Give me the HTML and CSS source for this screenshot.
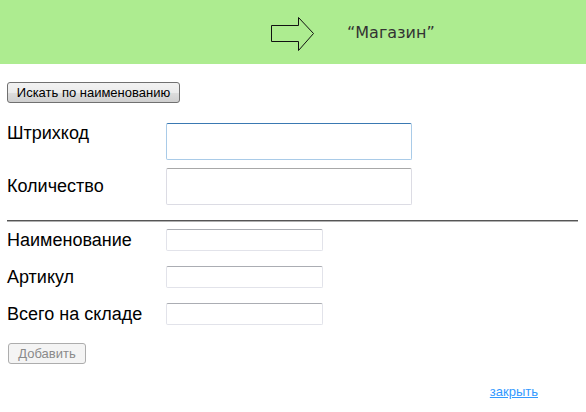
FILE: index.html
```html
<!DOCTYPE html>
<html lang="ru">
<head>
<meta charset="utf-8">
<title>Магазин</title>
<link rel="stylesheet" href="styles.css">
</head>
<body>
<header class="header">
  <svg class="arrow" width="44" height="36" viewBox="0 0 44 36" aria-hidden="true">
    <path d="M0.5 8.5 H27.5 V0.5 L42.5 16.5 L27.5 33.5 V24.5 H0.5 Z" fill="none" stroke="#111" stroke-width="1"/>
  </svg>
  <h1 class="title">“Магазин”</h1>
</header>
<main class="content">
  <button class="btn btn-search" type="button">Искать по наименованию</button>
  <div class="form-main">
    <div class="row row-top">
      <label class="label" for="barcode">Штрихкод</label>
      <input class="input input-large input-focus" id="barcode" type="text">
    </div>
    <div class="row">
      <label class="label" for="qty">Количество</label>
      <input class="input input-large" id="qty" type="text">
    </div>
  </div>
  <hr class="divider">
  <div class="form-info">
    <div class="row">
      <label class="label" for="name">Наименование</label>
      <input class="input input-small" id="name" type="text">
    </div>
    <div class="row">
      <label class="label" for="article">Артикул</label>
      <input class="input input-small" id="article" type="text">
    </div>
    <div class="row">
      <label class="label" for="stock">Всего на складе</label>
      <input class="input input-small" id="stock" type="text">
    </div>
  </div>
  <button class="btn btn-add" type="button" disabled>Добавить</button>
  <div class="footer">
    <a class="close-link" href="#">закрыть</a>
  </div>
</main>
</body>
</html>
```

FILE: styles.css
```css
* { box-sizing: border-box; }

html, body {
  margin: 0;
  padding: 0;
  background: #ffffff;
  font-family: "Liberation Sans", Arial, sans-serif;
  color: #000;
}

.header {
  height: 64px;
  background: #adec90;
  display: flex;
  align-items: center;
  padding-left: 271px;
}

.arrow {
  display: block;
  margin-top: 6px;
}

.title {
  margin: 0 0 0 32px;
  font-family: "DejaVu Sans", Verdana, sans-serif;
  font-weight: normal;
  font-size: 16px;
  color: #333;
}

.content {
  padding: 18px 8px 0 7px;
}

.btn {
  display: block;
  font-family: "Liberation Sans", Arial, sans-serif;
  font-size: 13px;
  height: 21px;
  padding: 0;
  border-radius: 3px;
  white-space: nowrap;
  text-align: center;
}

.btn-search {
  width: 173px;
  color: #000;
  border: 1px solid #707070;
  background: linear-gradient(#f2f2f2, #ebebeb 50%, #dddddd 51%, #cfcfcf);
}

.form-main {
  margin-top: 20px;
  display: flex;
  flex-direction: column;
  gap: 8px;
}

.row {
  display: grid;
  grid-template-columns: 159px auto;
  align-items: center;
  justify-content: start;
}

.row-top { align-items: start; }

.label {
  font-size: 18px;
  line-height: 21px;
  white-space: nowrap;
}

.input {
  display: block;
  border: 1px solid #dcdce4;
  border-top-color: #a8a8a8;
  border-radius: 2px;
  background: #fff;
  padding: 0;
  outline: none;
}

.input-large {
  width: 246px;
  height: 37px;
}

.input-focus {
  border-color: #a9cbe8;
  border-top-color: #3a79b2;
}

.input-small {
  width: 157px;
  height: 22px;
  border-color: #e2e3ea;
  border-top-color: #abadb3;
}

.divider {
  margin: 15px 0 7px 0;
  border: 0;
  border-top: 1px solid #555;
  border-bottom: 1px solid #b0b0b0;
  height: 0;
}

.form-info {
  display: flex;
  flex-direction: column;
  gap: 15px;
}

.btn-add {
  margin-top: 18px;
  margin-left: 1px;
  width: 78px;
  color: #8a8a8a;
  border: 1px solid #adadad;
  background: #f4f4f4;
}

.footer {
  display: flex;
  justify-content: flex-end;
  padding-right: 40px;
  margin-top: 20px;
}

.close-link {
  font-size: 13px;
  color: #3399ff;
  text-decoration: underline;
}
```
